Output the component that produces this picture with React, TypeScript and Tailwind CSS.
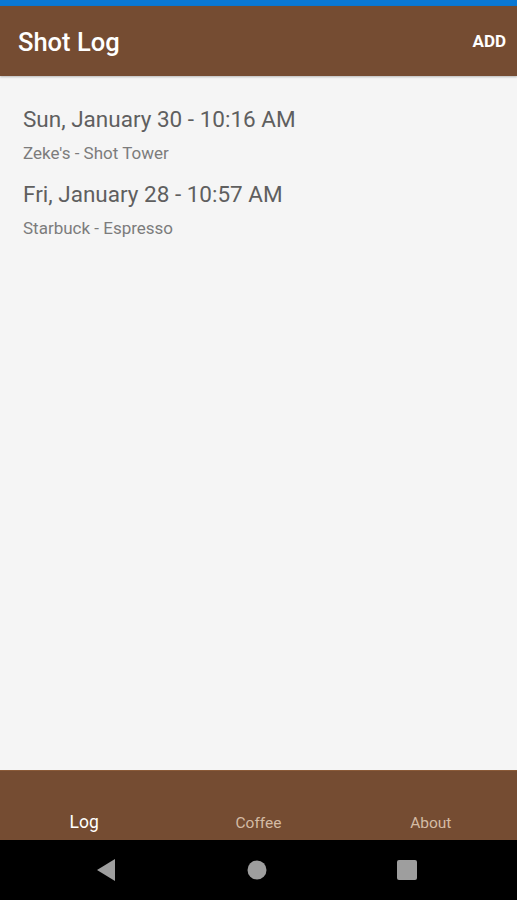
import React from "react";

type Shot = { when: string; what: string };

const shots: Shot[] = [
  { when: "Sun, January 30 - 10:16 AM", what: "Zeke's - Shot Tower" },
  { when: "Fri, January 28 - 10:57 AM", what: "Starbuck - Espresso" },
];

const tabs = ["Log", "Coffee", "About"];

export default function App() {
  return (
    <div
      className="flex flex-col h-[900px] w-[517px] bg-[#f5f5f5]"
      style={{ fontFamily: "Roboto, 'Liberation Sans', sans-serif" }}
    >
      <div className="h-[6px] bg-[#0a78d4]" />
      <div className="h-[70px] bg-[#754c32] flex items-center justify-between pl-[18px] pr-[11px] pt-[2px] shadow-[0_1px_2px_rgba(0,0,0,0.25)]">
        <span className="text-white text-[25.5px] font-medium">Shot Log</span>
        <span className="text-white text-[17px] font-bold">ADD</span>
      </div>
      <div className="flex-1 flex flex-col pt-[29px] pl-[23px]">
        {shots.map((s, i) => (
          <div key={i} className="flex flex-col mb-[16px]">
            <span className="text-[22.5px] leading-[28px] text-[#5f5f5f]">{s.when}</span>
            <span className="text-[17px] leading-[22px] text-[#7c7c7c] mt-[9px]">{s.what}</span>
          </div>
        ))}
      </div>
      <div className="h-[70px] bg-[#754c32] grid grid-cols-3 items-end pb-[5px] border-t border-[#8a5a38]">
        {tabs.map((t, i) => (
          <span
            key={t}
            className={
              i === 0
                ? "text-center text-[17.5px] text-white pr-[4px]"
                : "text-center text-[15.5px] text-[#d4bba4]"
            }
          >
            {t}
          </span>
        ))}
      </div>
      <div className="h-[60px] bg-black flex items-center justify-between pl-[97px] pr-[100px]">
        <svg width="19" height="22" viewBox="0 0 19 22">
          <polygon points="18,0 18,22 0,11" fill="#9e9e9e" />
        </svg>
        <svg width="20" height="20" viewBox="0 0 20 20">
          <circle cx="10" cy="10" r="9.5" fill="#9e9e9e" />
        </svg>
        <svg width="20" height="20" viewBox="0 0 20 20">
          <rect x="0" y="0" width="20" height="20" rx="2" fill="#9e9e9e" />
        </svg>
      </div>
    </div>
  );
}
